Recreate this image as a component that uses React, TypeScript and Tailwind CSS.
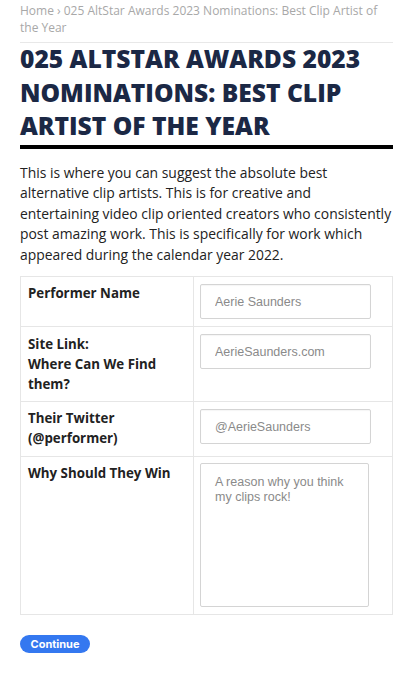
import React from "react";

export default function App() {
  const os = { fontFamily: '"Open Sans", "Noto Sans", sans-serif' };
  const inputCls =
    "w-full h-[35px] border border-[#d4d4d4] rounded-[2px] px-[14px] text-[12.5px] text-[#555] placeholder:text-[#8a8a8a] bg-white outline-none shadow-[inset_0_1px_1px_rgba(0,0,0,0.04)]";
  const inputFont = { fontFamily: '"Liberation Sans", Arial, sans-serif' };
  const label = "text-[13.3px] leading-[20px] font-bold text-[#222]";
  return (
    <div className="w-[413px] min-h-[680px] bg-white px-[20px] pt-[2px]" style={os}>
      <div className="text-[12px] leading-[17px] text-[#a8a8a8] pb-[6px] border-b border-[#e8e8e8]">
        Home › 025 AltStar Awards 2023 Nominations: Best Clip Artist of the Year
      </div>
      <h1 className="mt-[-1px] text-[24.6px] leading-[33.5px] font-extrabold text-[#1b2845] uppercase">
        025 AltStar Awards 2023 Nominations: Best Clip Artist of the Year
      </h1>
      <div className="mt-[2px] h-[4px] bg-black" />
      <p className="mt-[14px] text-[13.9px] leading-[20.6px] text-[#222] whitespace-nowrap">
        This is where you can suggest the absolute best
        <br />
        alternative clip artists. This is for creative and
        <br />
        entertaining video clip oriented creators who consistently
        <br />
        post amazing work. This is specifically for work which
        <br />
        appeared during the calendar year 2022.
      </p>
      <div className="mt-[11px] border border-[#e6e6e6] grid grid-cols-[173px_1fr]">
        <div className={`h-[50px] border-r border-b border-[#e6e6e6] px-[7px] pt-[6px] ${label}`}>
          Performer Name
        </div>
        <div className="h-[50px] border-b border-[#e6e6e6] pl-[6px] pr-[21px] pt-[7px]">
          <input className={inputCls} style={inputFont} placeholder="Aerie Saunders" />
        </div>
        <div className={`h-[75px] border-r border-b border-[#e6e6e6] px-[7px] pt-[7px] ${label}`}>
          Site Link:
          <br />
          Where Can We Find them?
        </div>
        <div className="h-[75px] border-b border-[#e6e6e6] pl-[6px] pr-[21px] pt-[7px]">
          <input className={inputCls} style={inputFont} placeholder="AerieSaunders.com" />
        </div>
        <div className={`h-[55px] border-r border-b border-[#e6e6e6] px-[7px] pt-[6px] ${label}`}>
          Their Twitter (@performer)
        </div>
        <div className="h-[55px] border-b border-[#e6e6e6] pl-[6px] pr-[21px] pt-[7px]">
          <input className={inputCls} style={inputFont} placeholder="@AerieSaunders" />
        </div>
        <div className={`h-[157px] border-r border-[#e6e6e6] px-[7px] pt-[6px] ${label}`}>
          Why Should They Win
        </div>
        <div className="h-[157px] pl-[6px] pr-[23px] pt-[6px]">
          <textarea
            className="w-full h-[144px] border border-[#d4d4d4] rounded-[2px] px-[14px] py-[11px] text-[12.5px] leading-[15px] placeholder:text-[#8a8a8a] resize-none outline-none"
            style={inputFont}
            placeholder="A reason why you think my clips rock!"
          />
        </div>
      </div>
      <button
        className="mt-[20px] h-[18px] w-[70px] rounded-full bg-[#3478f0] text-white text-[11px] font-bold leading-[18px]"
        style={{ fontFamily: '"Inter", "Liberation Sans", sans-serif' }}
      >
        Continue
      </button>
    </div>
  );
}
